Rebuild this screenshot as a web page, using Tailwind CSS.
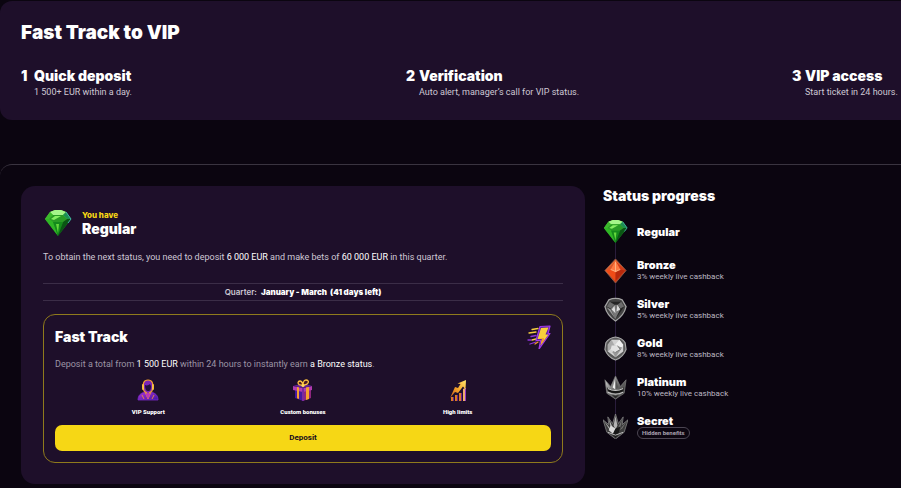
<!DOCTYPE html>
<html lang="en">
<head>
    <meta charset="UTF-8">
    <meta name="viewport" content="width=device-width, initial-scale=1.0">
    <title>Fast Track to VIP</title>
    <script src="https://cdn.jsdelivr.net/npm/@tailwindcss/browser@4"></script>
</head>
<body class="min-h-screen bg-[#0b0510] text-white font-[Roboto,Arial,sans-serif] text-[9px] leading-3">
    <!-- shared icons -->
    <svg class="absolute size-0" aria-hidden="true">
        <defs>
            <linearGradient id="green" x1="0" y1="0" x2="0" y2="1"><stop offset="0" stop-color="#5fe03a"/><stop offset="1" stop-color="#0b6a16"/></linearGradient>
            <linearGradient id="red" x1="0" y1="0" x2="1" y2="1"><stop offset="0" stop-color="#ff8a45"/><stop offset="1" stop-color="#b82105"/></linearGradient>
            <linearGradient id="silver" x1="0" y1="0" x2="1" y2="1"><stop offset="0" stop-color="#e8e8e8"/><stop offset=".5" stop-color="#6b6b6b"/><stop offset="1" stop-color="#2d2d2d"/></linearGradient>
            <linearGradient id="gold" x1="0" y1="1" x2="1" y2="0"><stop offset="0" stop-color="#c4561a"/><stop offset=".5" stop-color="#f5a52a"/><stop offset="1" stop-color="#ffe66d"/></linearGradient>
            <linearGradient id="violet" x1="0" y1="0" x2="1" y2="1"><stop offset="0" stop-color="#b234d8"/><stop offset="1" stop-color="#3d14a0"/></linearGradient>
            <symbol id="gem" viewBox="0 0 28 28">
                <path d="M6 3 11 1h6l5 2 5 7-13 17L1 10z" fill="url(#green)"/>
                <path d="M6 3 11 1h6l5 2-3 3H9z" fill="#a6f58a"/>
                <path d="M6 3 9 6 5 10H1z" fill="#3cb82c"/>
                <path d="M9 6h10l4 4-4 3H9l-4-3z" fill="#2a9b25"/>
                <path d="M11 7h6l-7 4-3-1z" fill="#86ee62"/>
                <path d="M22 3l5 7h-4l-4-4z" fill="#1d8f52"/>
                <path d="M1 10h4l4 3 5 14z" fill="#2fb625"/>
                <path d="M9 13h10l-5 14z" fill="#148a1b"/>
                <path d="M12 15h3l-1 9z" fill="#65d83c"/>
                <path d="M27 10h-4l-4 3-5 14z" fill="#0a5714"/>
                <path d="M22 3l5 7-3 4" fill="none" stroke="#3fb3a3" stroke-width="1"/>
            </symbol>
        </defs>
    </svg>

    <header class="mt-px rounded-l-xl bg-[#1e0f2a] pt-5 pb-[22px] pl-[21px]">
        <h1 class="font-[Inter,sans-serif] text-[19px] leading-6 font-black">Fast Track to VIP</h1>
        <ol class="mt-[21px] grid grid-cols-[385fr_386fr_109fr] whitespace-nowrap">
            <li class="grid grid-cols-[13px_auto]">
                <span class="font-[Inter,sans-serif] text-[14px] leading-5 font-black">1</span>
                <h2 class="font-[Inter,sans-serif] text-[14px] leading-5 font-black">Quick deposit</h2>
                <p class="col-start-2 text-[#cec8d4]">1 500+ EUR within a day.</p>
            </li>
            <li class="grid grid-cols-[13px_auto]">
                <span class="font-[Inter,sans-serif] text-[14px] leading-5 font-black">2</span>
                <h2 class="font-[Inter,sans-serif] text-[14px] leading-5 font-black">Verification</h2>
                <p class="col-start-2 text-[#cec8d4]">Auto alert, manager’s call for VIP status.</p>
            </li>
            <li class="grid grid-cols-[13px_auto]">
                <span class="font-[Inter,sans-serif] text-[14px] leading-5 font-black">3</span>
                <h2 class="font-[Inter,sans-serif] text-[14px] leading-5 font-black">VIP access</h2>
                <p class="col-start-2 text-[#cec8d4]">Start ticket in 24 hours.</p>
            </li>
        </ol>
    </header>

    <main class="mt-[44px] grid grid-cols-[564fr_298fr] gap-[18px] rounded-tl-xl border-t border-[#3a3440] pt-[21px] pl-[21px]">
        <section class="rounded-[14px] bg-[#1e0f2a] p-[22px] pb-[21px]">
            <div class="flex items-center gap-[10px] pt-px">
                <svg class="ml-px size-7"><use href="#gem"/></svg>
                <div class="font-[Inter,sans-serif]">
                    <p class="text-[8px] leading-3 font-extrabold text-[#f8d714]">You have</p>
                    <h2 class="text-[14px] leading-4 font-black">Regular</h2>
                </div>
            </div>
            <p class="mt-[14px] text-[#cec8d4]">To obtain the next status, you need to deposit <span class="text-white">6 000 EUR</span> and make bets of <span class="text-white">60 000 EUR</span> in this quarter.</p>
            <p class="mt-5 flex justify-center gap-1 border-y border-[#3b2d47] py-[2px] font-[Inter,sans-serif] text-[8px] leading-3">
                <span class="font-semibold text-[#cec8d4]">Quarter:</span>
                <strong class="font-black">January - March&nbsp; (41 days left)</strong>
            </p>
            <div class="mt-[13px] rounded-xl border border-[#8f7a1c] p-[11px] pt-[10px]">
                <div class="flex items-center justify-between">
                    <h2 class="font-[Inter,sans-serif] text-[14px] leading-6 font-black">Fast Track</h2>
                    <svg class="size-6" viewBox="0 0 24 24">
                        <g fill="none" stroke-linecap="round" stroke-width="1.3">
                            <path d="M5 4.500 11 3.500M2 8l7-1M5 15l4-1" stroke="#f5cf3f"/>
                            <path d="M4 11.500 9 10.500M1 15h3M3 19l6-2" stroke="#8c35d8"/>
                            <path d="M8 19l3-2" stroke="#f09a2b"/>
                        </g>
                        <path d="M13 1.500 23 1l-2 7.500H23L12 24l1.500-8.500H9z" fill="#5b1ba6" stroke="#a13bea" stroke-width="1.200" stroke-linejoin="round"/>
                        <path d="M14 3 21.500 2.500 18.500 9.500h3L13.500 20.500l1.500-6.500H10.500z" fill="#f8cf3c"/>
                        <path d="M10.500 14H15l-1.500 6.500 4-5.500-1-2z" fill="#f09d2e"/>
                    </svg>
                </div>
                <p class="mt-[9px] text-[#9c94a5]">Deposit a total from <span class="text-white">1 500 EUR</span> within 24 hours to instantly earn <span class="text-white">a Bronze status</span>.</p>
                <ul class="mt-[9px] grid grid-cols-3 px-4 text-center text-[6px] leading-2 font-black">
                    <li>
                        <svg class="mx-auto mb-[7px] size-[22px]" viewBox="0 0 22 22">
                            <path d="M1 21c0-5 3-7 7-8h6c4 1 7 3 7 8z" fill="url(#violet)" stroke="#7829c6" stroke-width=".8"/>
                            <path d="M7 12c-2-8 0-11 4-11s6 3 4 11l-4 3z" fill="#7a24b8" stroke="#f3a02e" stroke-width="1.200"/>
                            <path d="M8 6c2 1 4 0 5-1l1 2c0 4-1 5-3 5s-3-2-3-6z" fill="#22103d"/>
                            <path d="M6 6v4M16 6v4" stroke="#ffc742" stroke-width="1.800" stroke-linecap="round"/>
                            <path d="M8 13l3 7 3-7M5 16l2 4M17 16l-2 4" fill="none" stroke="#f08b3e" stroke-width=".9"/>
                            <path d="M10 14h2l1 2-2 4-2-4z" fill="#bd34bd"/>
                        </svg>
                        VIP Support
                    </li>
                    <li>
                        <svg class="mx-auto mb-[7px] size-[22px]" viewBox="0 0 22 22">
                            <path d="M3 10l8 2v10l-8-3z" fill="#44199f"/>
                            <path d="M11 12l8-2v9l-8 3z" fill="#8f267f"/>
                            <path d="M1 7l10 2 9-2v4l-9 2-10-2z" fill="#b23bb0"/>
                            <path d="M1 7l10-3 9 3-9 2z" fill="#612294"/>
                            <path d="M5 8l2 .5V20l-2-.7zM14 8.500l3-.6V20l-3 1z" fill="#f6a12e"/>
                            <path d="M10 9h2v13h-2z" fill="#7a2a9e"/>
                            <path d="M11 6C5 7 5 2 8 2c2 0 3 4 3 4s0-5 3-5c4 0 3 5-3 5z" fill="#4b1b26" stroke="#ffc241" stroke-width="1.300"/>
                            <circle cx="11" cy="6.500" r="1.600" fill="#ffd95d"/>
                        </svg>
                        Custom bonuses
                    </li>
                    <li>
                        <svg class="mx-auto mb-[7px] size-[22px]" viewBox="0 0 22 22">
                            <path d="M4 18h2v4H4zM8 16h2v6H8zM12 14h2v8h-2z" fill="#d97a25"/>
                            <path d="M6 18h1v4H6zM10 16h1v6h-1zM14 14h1v8h-1z" fill="#6b218d"/>
                            <path d="M16 10l2-1v13h-2z" fill="#efab6f"/>
                            <path d="M18 9h1v13h-1z" fill="#8d36c6"/>
                            <path d="M3 19 8 8l3 1 2.500-4-3-.5L19 1l-.5 9.500-2.500-3L11 14l-3-1z" fill="url(#gold)"/>
                        </svg>
                        High limits
                    </li>
                </ul>
                <button type="button" class="mt-[9px] h-[26px] w-full rounded-[7px] bg-[#f6d715] text-[8px] font-bold text-[#160b1e]">Deposit</button>
            </div>
        </section>

        <aside>
            <h2 class="font-[Inter,sans-serif] text-[14px] leading-5 font-black">Status progress</h2>
            <ul class="relative mt-[6px] before:absolute before:top-5 before:bottom-5 before:left-3 before:w-px before:bg-[#2a1d3c]">
                <li class="relative flex h-[39px] items-center gap-[9px]">
                    <svg class="size-[25px]"><use href="#gem"/></svg>
                    <h3 class="font-[Inter,sans-serif] text-[11px] leading-3 font-black">Regular</h3>
                </li>
                <li class="relative flex h-[39px] items-center gap-[9px]">
                    <svg class="size-[25px]" viewBox="0 0 26 26">
                        <path d="M13 1 24 13 13 26 2 13z" fill="url(#red)" stroke="#8d5646" stroke-width="1"/>
                        <path d="M13 3 8 12l-5 1z" fill="#d9562c"/>
                        <path d="M13 3l5 9 5 1z" fill="#d23a18"/>
                        <path d="M13 3 8 12l5 3 5-3z" fill="#ff7a42"/>
                        <path d="M8 12l5 3v9L3 13z" fill="#f04b17"/>
                        <path d="M18 12l-5 3v9l10-11z" fill="#b8290c"/>
                        <path d="M13 4v10l5-2M13 14l-5-2" fill="none" stroke="#ffc9a0" stroke-width=".7"/>
                    </svg>
                    <div>
                        <h3 class="font-[Inter,sans-serif] text-[11px] leading-3 font-black">Bronze</h3>
                        <p class="text-[8px] leading-[11px] text-[#bdb7c2]">3% weekly live cashback</p>
                    </div>
                </li>
                <li class="relative flex h-[39px] items-center gap-[9px]">
                    <svg class="size-[25px]" viewBox="0 0 26 26">
                        <path d="M6 3Q13 0 20 3l4 7q-2 9-11 15Q4 19 2 10z" fill="#444" stroke="#a5a5a5" stroke-width="1.300"/>
                        <path d="M7 5h12l3 5-4 3H8l-4-3z" fill="#252525"/>
                        <path d="M7 5l5 3-4 4-4-2zM19 5l-4 3 3 4 4-2z" fill="#6c6c6c"/>
                        <path d="M12 8h3l3 5-5 10-5-11z" fill="#777"/>
                        <path d="M12 9l-3 4 4 4zM15 8l3 5-4 2z" fill="#dcdcdc"/>
                        <path d="M4 11l4 2 5 10z" fill="#999"/>
                        <path d="M18 13l4-3-9 13z" fill="#202020"/>
                    </svg>
                    <div>
                        <h3 class="font-[Inter,sans-serif] text-[11px] leading-3 font-black">Silver</h3>
                        <p class="text-[8px] leading-[11px] text-[#bdb7c2]">5% weekly live cashback</p>
                    </div>
                </li>
                <li class="relative flex h-[39px] items-center gap-[9px]">
                    <svg class="size-[25px]" viewBox="0 0 26 26">
                        <path d="M13 1q7 1 10 6l1 7q-3 8-11 11Q5 22 2 14l1-7q3-5 10-6z" fill="#5a5a5a" stroke="#a8a8a8" stroke-width="1.200"/>
                        <path d="M9 4h8l4 5v7l-8 6-8-6V9z" fill="#d2d2d2"/>
                        <path d="M9 4l3 6-7 6V9z" fill="#aaa"/>
                        <path d="M17 4l-5 6 8 2 1-3z" fill="#efefef"/>
                        <path d="M12 10l8 2-7 10-3-5z" fill="#989898"/>
                        <path d="M9 10h6l3 4-5 3-5-3z" fill="#e3e3e3"/>
                        <path d="M15 10l3 4-5 3" fill="none" stroke="#666" stroke-width=".8"/>
                    </svg>
                    <div>
                        <h3 class="font-[Inter,sans-serif] text-[11px] leading-3 font-black">Gold</h3>
                        <p class="text-[8px] leading-[11px] text-[#bdb7c2]">8% weekly live cashback</p>
                    </div>
                </li>
                <li class="relative flex h-[39px] items-center gap-[9px]">
                    <svg class="size-[25px]" viewBox="0 0 26 26">
                        <path d="M2 5l6 7 5-11 5 11 6-7-2 14-9 6-9-6z" fill="url(#silver)" stroke="#777" stroke-width=".8"/>
                        <path d="M13 3l-3 10 3 2z" fill="#eee"/>
                        <path d="M13 3l3 10-3 2z" fill="#555"/>
                        <path d="M4 13q9 5 18 0l-1 4q-8 4-16 0z" fill="#161616"/>
                        <path d="M5 14q8 4 16 0M5 18q8 4 16 0" fill="none" stroke="#c9c9c9" stroke-width="1.200"/>
                        <path d="M8 20l5 1 5-1-5 5z" fill="#292929" stroke="#888" stroke-width=".6"/>
                    </svg>
                    <div>
                        <h3 class="font-[Inter,sans-serif] text-[11px] leading-3 font-black">Platinum</h3>
                        <p class="text-[8px] leading-[11px] text-[#bdb7c2]">10% weekly live cashback</p>
                    </div>
                </li>
                <li class="relative flex h-[39px] items-center gap-[9px]">
                    <svg class="size-[25px]" viewBox="0 0 26 26">
                        <path d="M0 6l6 5-1-8 5 7 3-10 3 10 5-7-1 8 6-5-4 13-9 7-9-7z" fill="#3c3c3c" stroke="#858585" stroke-width=".8"/>
                        <path d="M13 2l-2 10 2 4 2-4zM6 5l2 9 3 2zM1 7l5 8 3 2z" fill="#b4b4b4"/>
                        <path d="M20 5l-2 9-3 2zM25 7l-5 8-3 2z" fill="#747474"/>
                        <path d="M8 12l5 3-2 6-5-4z" fill="#dadada"/>
                        <path d="M13 15l5-2-2 8-3 4-3-4z" fill="#181818"/>
                        <path d="M5 19l8 3 8-3" fill="none" stroke="#bdbdbd" stroke-width="1"/>
                    </svg>
                    <div>
                        <h3 class="font-[Inter,sans-serif] text-[11px] leading-3 font-black">Secret</h3>
                        <p class="rounded-md border border-[#4b4552] px-1 text-[6px] leading-[10px] font-bold text-[#a8a1af]">Hidden benefits</p>
                    </div>
                </li>
            </ul>
        </aside>
    </main>
</body>
</html>
